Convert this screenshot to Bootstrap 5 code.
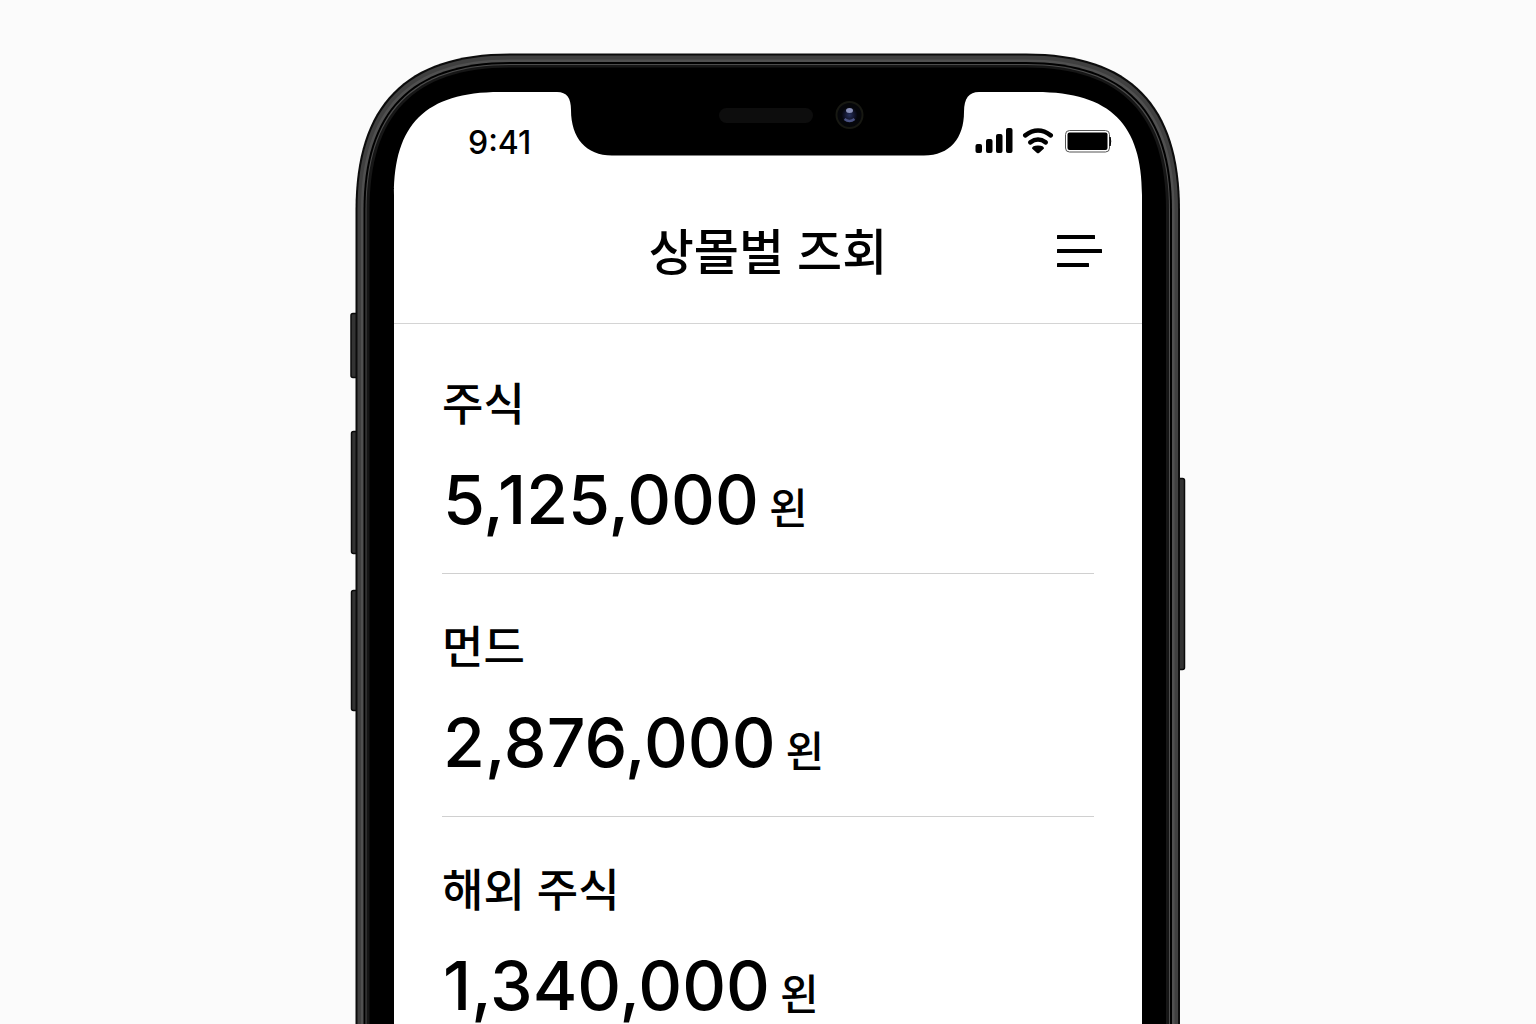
<!DOCTYPE html>
<html lang="ko">
<head>
<meta charset="utf-8">
<meta name="viewport" content="width=device-width, initial-scale=1">
<title>상몰벌 즈회</title>
<link href="https://cdn.jsdelivr.net/npm/bootstrap@5.3.0/dist/css/bootstrap.min.css" rel="stylesheet">
<style>
  body { background: #fbfbfb; color: #000; font-family: Inter, "Noto Sans CJK KR", sans-serif; }
  .stage { padding-top: 52px; }
  .phone { width: 100%; max-width: 836px; padding: 40px 44px 0; }
  .phone-art { z-index: 0; }
  .phone-screen { z-index: 1; }
  .status-bar { height: 98px; padding: 0 29px 0 74px; }
  .status-time { font-size: 32px; line-height: 40px; font-weight: 500; padding-top: 4px; }
  .title-bar { height: 134px; padding: 0 40px 12px; border-bottom: 1px solid #d4d4d4; display: grid; grid-template-columns: 46px 1fr 46px; }
  .title-text { font-size: 49px; line-height: 64px; font-weight: 500; padding-top: 4px; }
  .holdings { padding: 7px 48px 0; }
  .holding { height: 243px; padding-top: 44px; border-bottom: 1px solid #d0d0d0; }
  .holding-name { font-size: 45px; line-height: 60px; font-weight: 500; margin-bottom: 26px; }
  .holding-sum { font-size: 68px; line-height: 76px; font-weight: 500; padding-left: 1px; gap: 10px; }
  .holding-unit { font-size: 42px; line-height: 56px; }
</style>
<script src="https://cdn.jsdelivr.net/npm/bootstrap@5.3.0/dist/js/bootstrap.bundle.min.js"></script>
</head>
<body>
<div class="stage vh-100 overflow-hidden">
  <div class="phone position-relative mx-auto">
    <svg class="phone-art position-absolute top-0 start-0 w-100" viewBox="350 52 836 1100" aria-hidden="true">
      <defs>
        <radialGradient id="lens"><stop offset="0" stop-color="#26305c"/><stop offset=".6" stop-color="#12152c"/><stop offset="1" stop-color="#05060c"/></radialGradient>
      </defs>
      <g fill="#333" stroke="#0b0b0b" stroke-width="1.5">
        <rect x="351" y="313.500" width="8" height="64" rx="2"/>
        <rect x="351.500" y="431.500" width="8" height="122" rx="2"/>
        <rect x="351.500" y="590.500" width="8" height="120" rx="2"/>
        <rect x="1176" y="478.500" width="8.500" height="191" rx="2"/>
      </g>
      <path fill="#0c0c0c" d="M355.500 1160V210C355.500 105 405 53.500 510 53.500H1026C1131 53.500 1180 105 1180 210V1160Z"/>
      <path fill="#404040" d="M357.500 1160V210C357.500 107 406 55.500 510 55.500H1026C1130 55.500 1178 107 1178 210V1160Z"/>
      <path fill="#505050" d="M361 1160V210C361 110 408 59.500 510 59.500H1026C1128 59.500 1174.500 110 1174.500 210V1160Z"/>
      <path fill="#000" d="M363.500 1160V210C363.500 112 410 62 510 62H1026C1126 62 1172 112 1172 210V1160Z"/>
      <path fill="#4c4c4c" d="M365.500 1160V210C365.500 113 411 64 510 64H1026C1125 64 1170 113 1170 210V1160Z"/>
      <path fill="#161616" d="M366.500 1160V210C366.500 114 412 65 510 65H1026C1124 65 1169 114 1169 210V1160Z"/>
      <path fill="#000" d="M369.500 1160V210C369.500 116 413 67.500 510 67.500H1026C1123 67.500 1166 116 1166 210V1160Z"/>
      <path fill="#fff" d="M394 1160V195C394 125 425 92 500 92H557C567 92 571 98 571 110C571 138 586 155.500 612 155.500H924C950 155.500 964 138 964 112C964 98 969 92 979 92H1036C1111 92 1142 125 1142 195V1160Z"/>
      <rect x="719" y="108" width="94" height="15" rx="7.500" fill="#0d0d0d"/>
      <circle cx="849.500" cy="115" r="13" fill="#05060a" stroke="#171812" stroke-width="2"/>
      <circle cx="849.500" cy="115" r="8" fill="url(#lens)"/>
      <ellipse cx="849.500" cy="110.500" rx="3.500" ry="2.500" fill="#8990b8"/>
      <path d="M844.500 119q5 4 10 0" fill="none" stroke="#4a5282" stroke-width="2.500"/>
    </svg>

    <main class="phone-screen position-relative">
      <div class="status-bar d-flex justify-content-between align-items-center">
        <div class="status-time">9:41</div>
        <svg width="138" height="28" viewBox="975 127 138 28" role="img" aria-label="신호, 와이파이, 배터리">
          <rect x="975.500" y="144" width="6.500" height="9" rx="2"/>
          <rect x="986" y="139" width="6.500" height="14" rx="2"/>
          <rect x="996" y="134" width="6.500" height="19" rx="2"/>
          <rect x="1006" y="128" width="6.500" height="25" rx="2"/>
          <g fill="none" stroke="#000" stroke-width="4.600" stroke-linecap="round">
            <path d="M1025.300 135.300Q1038 125.700 1050.700 135.300"/>
            <path d="M1030.300 142.300Q1038 136.700 1045.700 142.300"/>
          </g>
          <path d="M1032 148.500Q1032 145.500 1038 145.500Q1044 145.500 1044 148.500L1039.300 152.700Q1038 153.900 1036.700 152.700Z"/>
          <rect x="1065.500" y="130.500" width="44" height="21.500" rx="4" fill="#fff" stroke="#555" stroke-width="1"/>
          <rect x="1067.500" y="132.500" width="40" height="17.500" rx="2"/>
          <path d="M1110 137Q1111.500 141 1110 146Z" stroke="#000"/>
        </svg>
      </div>

      <header class="title-bar align-items-center">
        <span></span>
        <h1 class="title-text text-center text-nowrap m-0">상몰벌 즈회</h1>
        <button type="button" class="btn p-0 border-0 d-flex" aria-label="메뉴">
          <svg width="46" height="36" viewBox="0 0 46 36" aria-hidden="true" fill="#000">
            <rect x="1" y="2" width="38" height="4" rx=".5"/>
            <rect x="1" y="16" width="45" height="4" rx=".5"/>
            <rect x="1" y="30" width="32" height="4" rx=".5"/>
          </svg>
        </button>
      </header>

      <ul class="holdings list-unstyled m-0">
        <li class="holding">
          <h2 class="holding-name">주식</h2>
          <div class="holding-sum d-flex align-items-end"><span>5,125,000</span><span class="holding-unit">왼</span></div>
        </li>
        <li class="holding">
          <h2 class="holding-name">먼드</h2>
          <div class="holding-sum d-flex align-items-end"><span>2,876,000</span><span class="holding-unit">왼</span></div>
        </li>
        <li class="holding">
          <h2 class="holding-name">해외 주식</h2>
          <div class="holding-sum d-flex align-items-end"><span>1,340,000</span><span class="holding-unit">왼</span></div>
        </li>
      </ul>
    </main>
  </div>
</div>
</body>
</html>
